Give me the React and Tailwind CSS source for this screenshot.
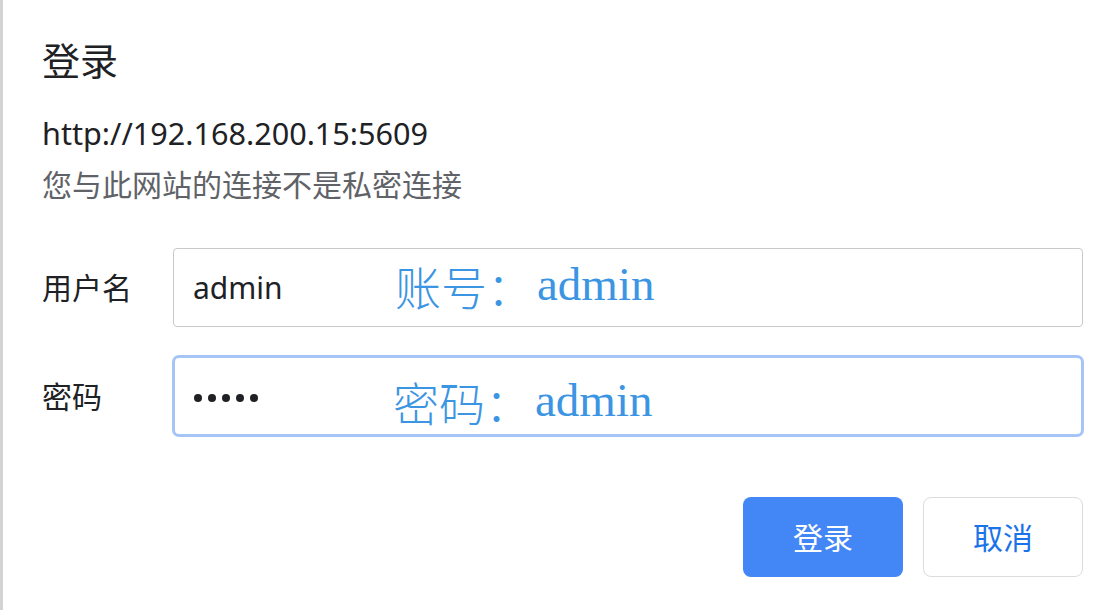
import React from 'react';

const sans = { fontFamily: '"Noto Sans", "Noto Sans CJK SC", sans-serif' };

const Note = ({ label, className }) => (
  <div className={`absolute flex items-baseline text-[#3b95e3] ${className}`}>
    <span className="text-[46px] leading-none" style={{ fontFamily: '"Noto Sans CJK SC", sans-serif', fontWeight: 300 }}>{label}：</span>
    <span className="text-[47px] leading-none relative -top-[5px] ml-[4px]" style={{ fontFamily: '"Liberation Serif", serif' }}>admin</span>
  </div>
);

const Field = ({ label, focused, children, note }) => (
  <div className="flex items-center">
    <div className="w-[131px] shrink-0 text-[30px] text-[#202124]">{label}</div>
    <div
      className={`relative flex-1 flex items-center ${
        focused
          ? 'h-[82px] border-[3px] border-[#a6c4f5] rounded-[7px] -ml-[1px] -mr-[1px] pl-[19px]'
          : 'h-[79px] border border-[#c9c9c9] rounded-[4px] pl-[19px]'
      }`}
    >
      {children}
      {note}
    </div>
  </div>
);

export default function App() {
  return (
    <div className="h-[610px] w-full bg-white border-l-[3px] border-[#d3d3d3] pl-[39px] pr-[26px] pt-[36px]" style={sans}>
      <h1 className="text-[38px] leading-[48px] text-[#202124]">登录</h1>
      <div className="mt-[29px] text-[30.6px] leading-[40px] text-[#202124]">http://192.168.200.15:5609</div>
      <div className="mt-[12px] text-[30px] leading-[40px] text-[#5f6368]">您与此网站的连接不是私密连接</div>

      <div className="mt-[43px] flex flex-col gap-[28px]">
        <Field label="用户名" note={<Note label="账号" className="left-[221px] top-[13px]" />}>
          <span className="text-[30px] text-[#202124]">admin</span>
        </Field>
        <Field label="密码" focused note={<Note label="密码" className="left-[218px] top-[20px]" />}>
          <div className="flex gap-[6px] mt-[4px]">
            <span className="w-[8px] h-[8px] rounded-full bg-[#202124]" />
            <span className="w-[8px] h-[8px] rounded-full bg-[#202124]" />
            <span className="w-[8px] h-[8px] rounded-full bg-[#202124]" />
            <span className="w-[8px] h-[8px] rounded-full bg-[#202124]" />
            <span className="w-[8px] h-[8px] rounded-full bg-[#202124]" />
          </div>
        </Field>
      </div>

      <div className="mt-[60px] flex justify-end gap-[20px]">
        <button className="w-[160px] h-[80px] rounded-[8px] bg-[#4386f5] text-white text-[30px]">登录</button>
        <button className="w-[160px] h-[80px] rounded-[8px] border border-[#dadce0] bg-white text-[#1a73e8] text-[30px]">取消</button>
      </div>
    </div>
  );
}
